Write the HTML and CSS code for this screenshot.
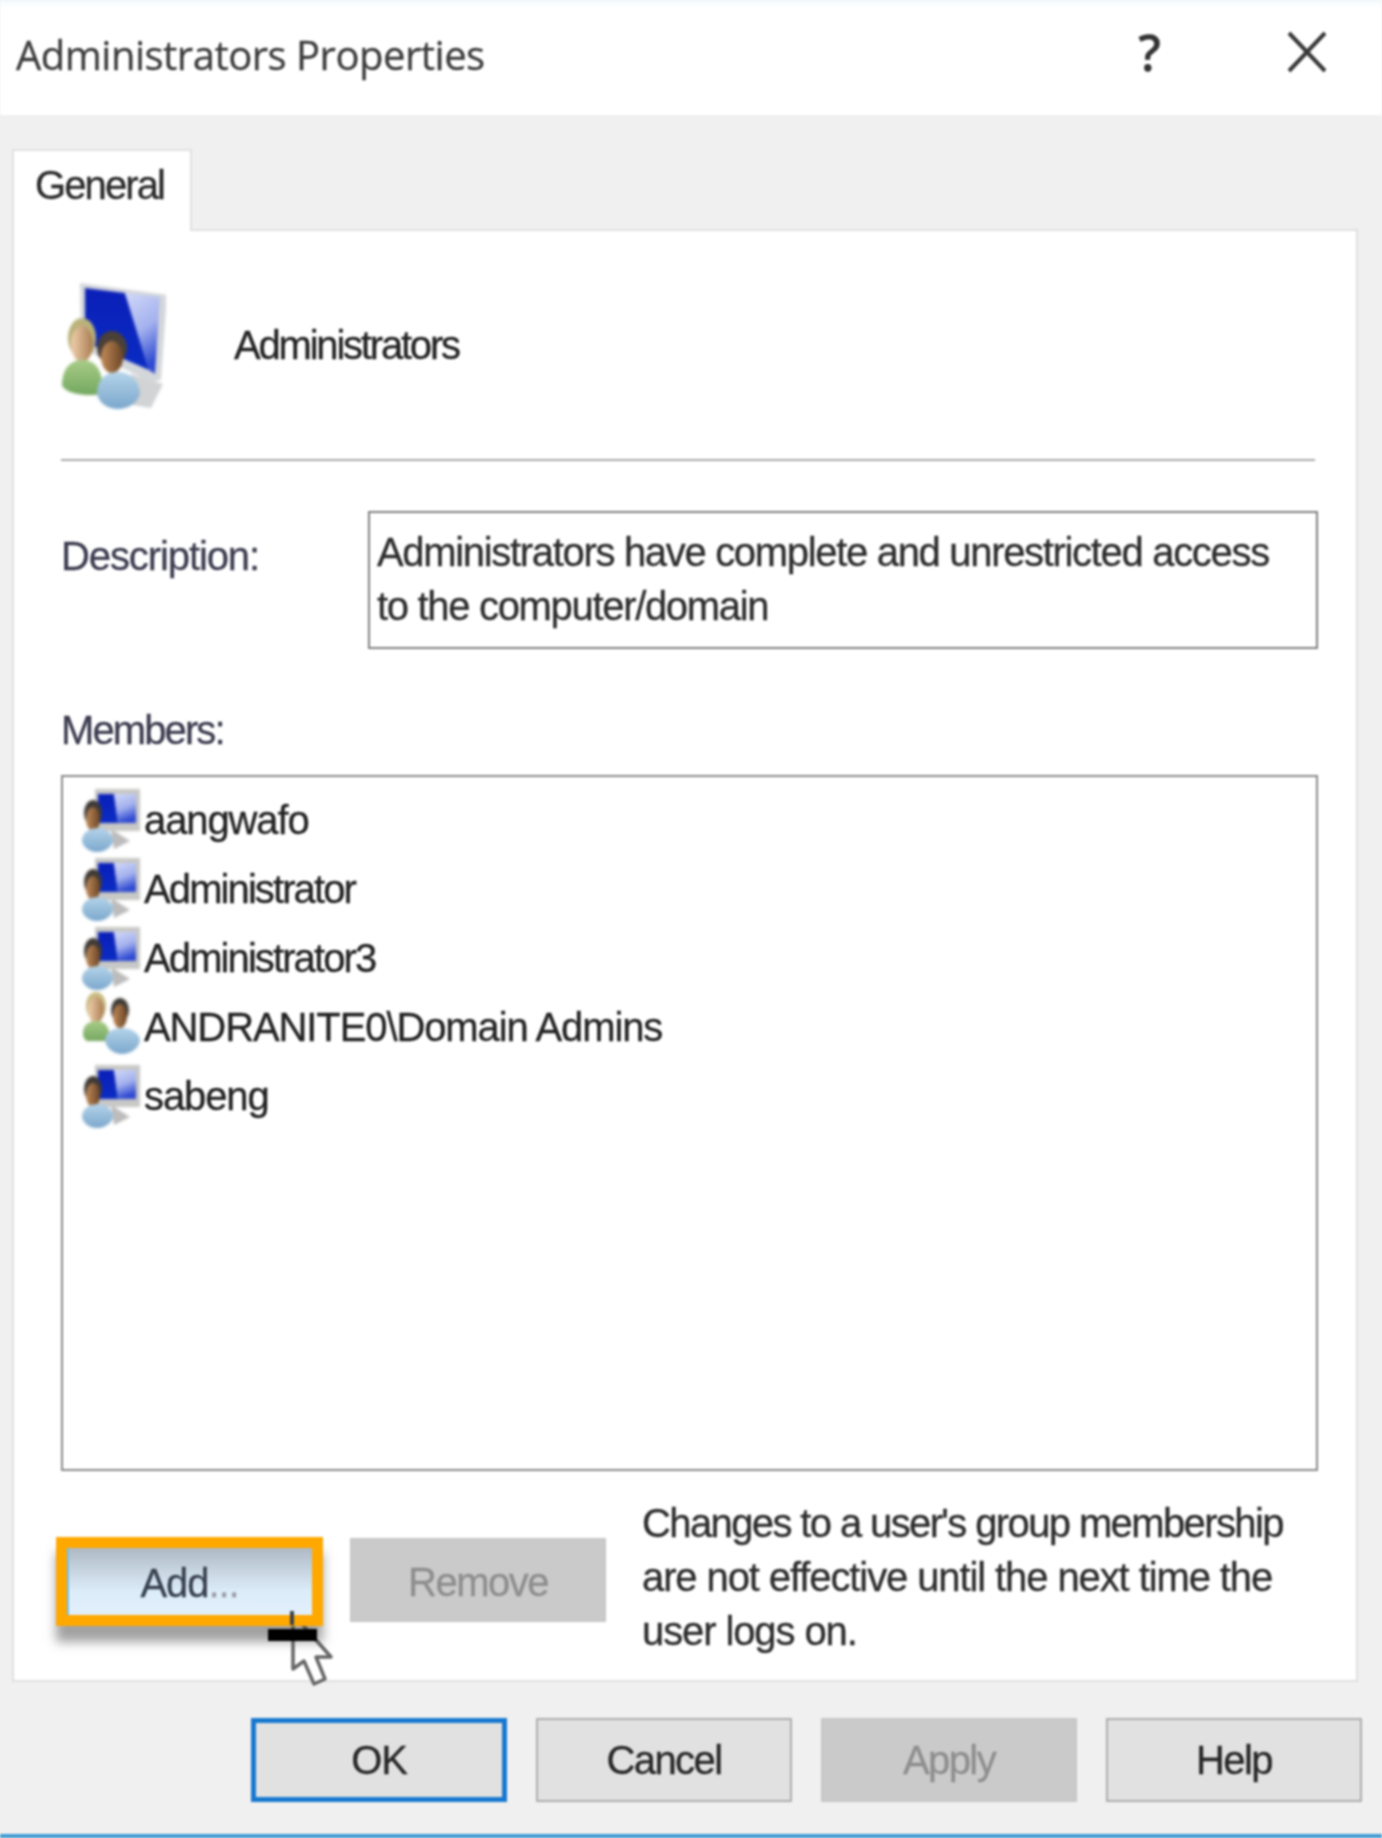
FILE: index.html
```html
<!DOCTYPE html>
<html lang="en">
<head>
<meta charset="utf-8">
<title>Administrators Properties</title>
<link rel="stylesheet" href="styles.css">
</head>
<body>
<svg class="defs" aria-hidden="true">
  <defs>
    <linearGradient id="light" x1="0" y1="0" x2="0.3" y2="1">
      <stop offset="0" stop-color="#d2d9f8"/><stop offset=".55" stop-color="#a3b1ee"/><stop offset="1" stop-color="#2f4ad2"/>
    </linearGradient>
    <linearGradient id="dark" x1="0" y1="0" x2="0" y2="1">
      <stop offset="0" stop-color="#0a1fb8"/><stop offset="1" stop-color="#0a2cc4"/>
    </linearGradient>
    <linearGradient id="face" x1="0" y1="0" x2="1" y2="0">
      <stop offset="0" stop-color="#f0cfae"/><stop offset="1" stop-color="#a87c50"/>
    </linearGradient>
    <linearGradient id="face2" x1="0" y1="0" x2="1" y2="0">
      <stop offset="0" stop-color="#c08a58"/><stop offset="1" stop-color="#6b4526"/>
    </linearGradient>
    <linearGradient id="blue" x1="0" y1="0" x2="0" y2="1">
      <stop offset="0" stop-color="#b4d4ea"/><stop offset="1" stop-color="#7ba7cc"/>
    </linearGradient>
    <linearGradient id="green" x1="0" y1="0" x2="0" y2="1">
      <stop offset="0" stop-color="#a8cc88"/><stop offset="1" stop-color="#74a860"/>
    </linearGradient>
    <symbol id="group-big" viewBox="0 0 105 130">
      <path d="M70 92 L102 102 L90 126 L66 122 Z" fill="#d2d3d4"/>
      <path d="M19 1 L106 13 L100 98 L90 100 L20 66 Z" fill="#d4d7da"/>
      <path d="M24 6 L64 11 L88 88 L24 60 Z" fill="url(#dark)"/>
      <path d="M64 11 L99 15 L94 92 L88 88 Z" fill="url(#light)"/>
      <ellipse cx="21" cy="56" rx="14" ry="20" fill="#b9b27a"/>
      <ellipse cx="21" cy="62" rx="11" ry="18" fill="url(#face)"/>
      <path d="M1 104 C1 86 10 78 21 78 C34 78 42 86 42 112 C30 114 8 114 1 104 Z" fill="url(#green)"/>
      <ellipse cx="51" cy="66" rx="15" ry="17" fill="#4a4038"/>
      <ellipse cx="51" cy="75" rx="11" ry="16" fill="url(#face2)"/>
      <path d="M36 112 C36 98 44 90 57 90 C70 90 79 100 79 112 C76 122 66 127 57 127 C48 127 38 122 36 112 Z" fill="url(#blue)"/>
    </symbol>
    <symbol id="user" viewBox="0 0 58 66">
      <path d="M29 40 L48 52 L32 60 Z" fill="#bcbcbc"/>
      <rect x="13" y="0" width="45" height="42" fill="#c8c8c6"/>
      <path d="M16 5 H32 L36 34 H16 Z" fill="url(#dark)"/>
      <path d="M32 5 H54 V34 H36 Z" fill="url(#light)"/>
      <ellipse cx="11" cy="24" rx="9" ry="13" fill="#3f3a36"/>
      <ellipse cx="11" cy="30" rx="7" ry="12" fill="url(#face2)"/>
      <path d="M0 52 C0 43 8 39 16 39 C25 39 31 45 31 52 C30 58 23 63 15 63 C7 63 1 58 0 52 Z" fill="url(#blue)"/>
    </symbol>
    <symbol id="group" viewBox="0 0 58 66">
      <ellipse cx="14" cy="17" rx="10" ry="14" fill="#c8bb80"/>
      <ellipse cx="14" cy="21" rx="8" ry="13" fill="url(#face)"/>
      <path d="M1 44 C1 36 7 32 14 32 C22 32 28 36 28 52 H5 C2 50 1 48 1 44 Z" fill="url(#green)"/>
      <ellipse cx="38" cy="21" rx="9" ry="12" fill="#3f3a36"/>
      <ellipse cx="38" cy="27" rx="7" ry="12" fill="url(#face2)"/>
      <path d="M23 52 C23 43 31 39 40 39 C50 39 58 45 58 52 C56 60 48 65 40 65 C32 65 25 60 23 52 Z" fill="url(#blue)"/>
    </symbol>
  </defs>
</svg>

<main class="dialog">
  <header class="titlebar">
    <h1 class="title">Administrators Properties</h1>
    <div class="title-actions">
      <span class="help-mark">?</span>
      <svg class="close" viewBox="0 0 40 44" aria-label="Close"><path d="M2 3 L38 41 M38 3 L2 41"/></svg>
    </div>
  </header>

  <div class="tabs"><div class="tab tight">General</div></div>

  <section class="panel">
    <div class="group-head">
      <svg class="group-icon"><use href="#group-big"/></svg>
      <span class="group-name tighter">Administrators</span>
    </div>
    <hr class="rule">
    <div class="desc-row">
      <span class="label desc-label">Description:</span>
      <div class="desc-box">Administrators have complete and unrestricted access<br>to the computer/domain</div>
    </div>
    <div class="label members-label tight">Members:</div>
    <ul class="members">
      <li class="member"><svg class="member-icon"><use href="#user"/></svg><span>aangwafo</span></li>
      <li class="member"><svg class="member-icon"><use href="#user"/></svg><span class="tight">Administrator</span></li>
      <li class="member"><svg class="member-icon"><use href="#user"/></svg><span class="tight">Administrator3</span></li>
      <li class="member"><svg class="member-icon member-icon-group"><use href="#group"/></svg><span>ANDRANITE0\Domain Admins</span></li>
      <li class="member"><svg class="member-icon"><use href="#user"/></svg><span>sabeng</span></li>
    </ul>
    <div class="member-actions">
      <div class="add-wrap">
        <svg class="cursor" viewBox="0 0 43 76"><path d="M3 3 L3 58 L14 50 L24 73 L35 68 L26 46 L41 46 Z"/></svg>
        <button class="btn-add" type="button">Add<span class="dots">...</span></button>
        <span class="black-bar"></span>
        <span class="cursor-tip"></span>
      </div>
      <button class="btn btn-remove" type="button" disabled>Remove</button>
      <p class="note"><span class="note-first">Changes to a user's group membership</span><br>are not effective until the next time the<br>user logs on.</p>
    </div>
  </section>

  <footer class="footer">
    <button class="btn btn-ok" type="button">OK</button>
    <button class="btn tight-btn" type="button">Cancel</button>
    <button class="btn btn-off tight-btn" type="button" disabled>Apply</button>
    <button class="btn tight-btn" type="button">Help</button>
  </footer>
  <div class="taskbar-edge"></div>
</main>
</body>
</html>
```
FILE: styles.css
```css
* { box-sizing: border-box; }
html, body { margin: 0; padding: 0; background: #f0f0f0; }
body { width: 1382px; height: 1838px; overflow: hidden; }
.defs { position: absolute; width: 0; height: 0; }

.dialog {
  width: 1382px;
  height: 1838px;
  display: flex;
  flex-direction: column;
  background: #f0f0f0;
  color: #222;
  font-family: "Liberation Sans", Arial, sans-serif;
  font-size: 40px;
  letter-spacing: -1.1px;
  -webkit-text-stroke: 0.3px currentColor;
  filter: blur(0.8px);
}
.tight { letter-spacing: -1.9px; }
.tighter { letter-spacing: -2.2px; }

.titlebar {
  height: 115px;
  flex: none;
  display: flex;
  align-items: center;
  justify-content: space-between;
  padding: 0 55px 6px 16px;
  background: linear-gradient(#f2fbfd 0, #fff 8px);
}
.title {
  margin: 0;
  font-family: "Open Sans", sans-serif;
  font-weight: 400;
  font-size: 40px;
  letter-spacing: -0.5px;
  color: #3c3c3c;
}
.title-actions { display: flex; align-items: center; gap: 126px; margin-top: -6px; }
.help-mark { font-family: "Open Sans", sans-serif; font-size: 50px; font-weight: 600; letter-spacing: 0; color: #333; line-height: 44px; }
.close { width: 40px; height: 44px; }
.close path { fill: none; stroke: #3a3a3a; stroke-width: 4; }

.tabs { height: 114px; flex: none; display: flex; align-items: flex-end; padding-left: 12px; }
.tab {
  position: relative;
  z-index: 1;
  width: 180px;
  height: 82px;
  margin-bottom: -2px;
  padding: 12px 0 0 21px;
  background: #fff;
  border: 2px solid #e0e0e0;
  border-bottom: 0;
  color: #2a2a2a;
}

.panel {
  height: 1453px;
  flex: none;
  margin: 0 24px 0 12px;
  padding: 0 41px 0 47px;
  background: #fff;
  border: 2px solid #e0e0e0;
  display: flex;
  flex-direction: column;
}
.group-head { height: 228px; flex: none; display: flex; align-items: center; gap: 68px; }
.group-icon { width: 105px; height: 130px; flex: none; margin-top: 4px; filter: blur(1.2px); }
.group-name { color: #222; }
.rule { width: 100%; height: 2px; margin: 0; border: 0; background: #a9a9a9; flex: none; }

.desc-row { display: flex; margin-top: 50px; height: 138px; flex: none; margin-right: -3px; }
.label { color: #3c3c50; }
.desc-label { width: 307px; flex: none; padding-top: 23px; }
.desc-box {
  flex: 1;
  border: 2px solid #808080;
  padding: 12px 0 0 7px;
  line-height: 54px;
  letter-spacing: -1.32px;
  color: #2c2c2c;
}
.members-label { margin-top: 58px; height: 68px; flex: none; line-height: 47px; }
.members {
  list-style: none;
  margin: 0 -3px 0 0;
  padding: 10px 0 0 19px;
  height: 696px;
  flex: none;
  border: 2px solid #8a8a8a;
  display: flex;
  flex-direction: column;
  gap: 3px;
}
.member { height: 66px; display: flex; align-items: center; gap: 4px; }
.member-icon { width: 58px; height: 66px; flex: none; margin-top: 4px; filter: blur(0.8px); }
.member-icon-group { margin-top: -11px; }

.member-actions { margin-top: 66px; display: flex; align-items: flex-start; }
.add-wrap { position: relative; width: 267px; height: 89px; flex: none; margin-left: -5px; }
.btn-add {
  position: relative;
  z-index: 1;
  width: 267px;
  height: 89px;
  border: 11px solid #ffa800;
  background: linear-gradient(#aeb9c4 0, #c8d6e2 35%, #dcecf9 65%, #e2f0fb 100%);
  box-shadow: 0 16px 10px 0 rgba(70, 70, 70, .5), inset 2px 0 0 #6fc0f0;
  font: inherit;
  letter-spacing: inherit;
  color: #38404e;
  padding: 3px 0 0;
}
.dots { color: #9a9aa8; }
.black-bar { position: absolute; z-index: 2; left: 212px; top: 92px; width: 49px; height: 12px; background: #000; }
.cursor-tip { position: absolute; z-index: 2; left: 234px; top: 74px; width: 4px; height: 14px; background: #39424c; }
.cursor { position: absolute; z-index: 0; left: 234px; top: 74px; width: 43px; height: 76px; }
.cursor path { fill: #fff; stroke: #666; stroke-width: 3.5; stroke-linejoin: round; }

.btn {
  width: 256px;
  height: 84px;
  flex: none;
  border: 2px solid #adadad;
  background: #e1e1e1;
  font: inherit;
  letter-spacing: inherit;
  color: #262626;
  padding: 0;
}
.tight-btn { letter-spacing: -1.6px; }
.btn-remove { margin: 1px 0 0 27px; padding-top: 4px; letter-spacing: -1.5px; background: #cacaca; border-color: #c6c6c6; color: #8e8e8e; }
.note { margin: -41px 0 0 36px; line-height: 54px; color: #2c2c2c; white-space: nowrap; }
.note-first { letter-spacing: -1.62px; }

.footer {
  height: 152px;
  flex: none;
  display: flex;
  justify-content: flex-end;
  gap: 29px;
  padding: 36px 20px 0 0;
}
.btn-ok { border: 5px solid #1878d0; padding-top: 1px; }
.btn-off { background: #cacaca; border-color: #c6c6c6; color: #8e8e8e; }
.taskbar-edge { flex: 1; background: #3f9ad2; }
```
